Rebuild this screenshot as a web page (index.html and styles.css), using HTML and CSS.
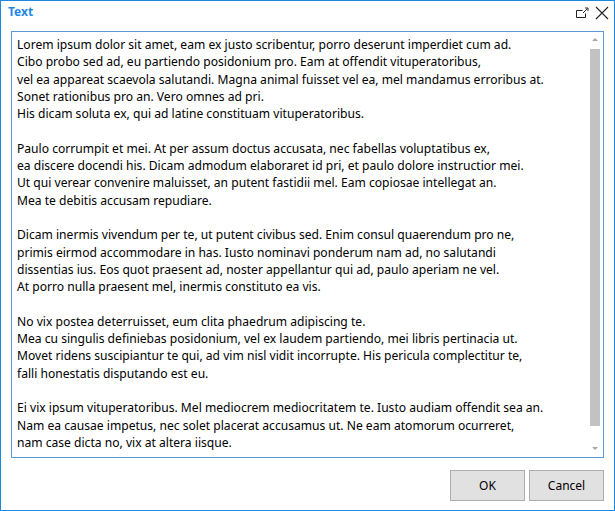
FILE: index.html
```html
<!DOCTYPE html>
<html>
<head>
<meta charset="utf-8">
<link rel="stylesheet" href="styles.css">
</head>
<body>
<div class="window">
  <div class="titlebar">
    <div class="title">Text</div>
    <div class="controls">
      <svg class="icon" width="14" height="14" viewBox="0 0 14 14">
        <path d="M7.5 4.5 H1.5 V11.5 H10.5 V7.5" fill="none" stroke="#222" stroke-width="1"/>
        <path d="M8 7 L12 3" stroke="#222" stroke-width="1"/>
        <path d="M10 2 H13 V5" fill="none" stroke="#222" stroke-width="1"/>
      </svg>
      <svg class="icon close" width="14" height="14" viewBox="0 0 14 14">
        <path d="M1 1 L13 13 M13 1 L1 13" stroke="#222" stroke-width="1.1"/>
      </svg>
    </div>
  </div>
  <div class="textbox">
    <div class="content">
      <p>Lorem ipsum dolor sit amet, eam ex justo scribentur, porro deserunt imperdiet cum ad.<br>Cibo probo sed ad, eu partiendo posidonium pro. Eam at offendit vituperatoribus,<br>vel ea appareat scaevola salutandi. Magna animal fuisset vel ea, mel mandamus erroribus at.<br>Sonet rationibus pro an. Vero omnes ad pri.<br>His dicam soluta ex, qui ad latine constituam vituperatoribus.</p>
      <p>Paulo corrumpit et mei. At per assum doctus accusata, nec fabellas voluptatibus ex,<br>ea discere docendi his. Dicam admodum elaboraret id pri, et paulo dolore instructior mei.<br>Ut qui verear convenire maluisset, an putent fastidii mel. Eam copiosae intellegat an.<br>Mea te debitis accusam repudiare.</p>
      <p>Dicam inermis vivendum per te, ut putent civibus sed. Enim consul quaerendum pro ne,<br>primis eirmod accommodare in has. Iusto nominavi ponderum nam ad, no salutandi<br>dissentias ius. Eos quot praesent ad, noster appellantur qui ad, paulo aperiam ne vel.<br>At porro nulla praesent mel, inermis constituto ea vis.</p>
      <p>No vix postea deterruisset, eum clita phaedrum adipiscing te.<br>Mea cu singulis definiebas posidonium, vel ex laudem partiendo, mei libris pertinacia ut.<br>Movet ridens suscipiantur te qui, ad vim nisl vidit incorrupte. His pericula complectitur te,<br>falli honestatis disputando est eu.</p>
      <p>Ei vix ipsum vituperatoribus. Mel mediocrem mediocritatem te. Iusto audiam offendit sea an.<br>Nam ea causae impetus, nec solet placerat accusamus ut. Ne eam atomorum ocurreret,<br>nam case dicta no, vix at altera iisque.</p>
    </div>
    <div class="scrollbar">
      <div class="arrow up"></div>
      <div class="thumb"></div>
      <div class="arrow down"></div>
    </div>
  </div>
  <div class="buttons">
    <button class="btn">OK</button>
    <button class="btn">Cancel</button>
  </div>
</div>
</body>
</html>
```

FILE: styles.css
```css
html, body {
  margin: 0;
  padding: 0;
  background: #ffffff;
}
.window {
  width: 615px;
  height: 511px;
  box-sizing: border-box;
  border: 1px solid #1c88e0;
  background: #ffffff;
  display: flex;
  flex-direction: column;
  padding: 0 10px;
  font-family: "Noto Sans", "Open Sans", sans-serif;
}
.titlebar {
  height: 30px;
  display: flex;
  justify-content: space-between;
  align-items: flex-start;
  margin: 0 -10px;
  padding: 0 5px 0 7px;
}
.title {
  margin-top: 2px;
  font-weight: bold;
  font-size: 12px;
  color: #1e88e5;
}
.controls {
  display: flex;
  gap: 6px;
  margin-top: 5px;
}
.icon {
  display: block;
}
.textbox {
  height: 427px;
  box-sizing: border-box;
  border: 1px solid #5a9bd6;
  display: flex;
}
.content {
  flex: 1;
  padding: 4px 0 0 5px;
  font-size: 12.1px;
  line-height: 17.3px;
  color: #000;
  overflow: hidden;
  white-space: nowrap;
}
.content p {
  margin: 0 0 17.3px 0;
}
.scrollbar {
  width: 17px;
  display: flex;
  flex-direction: column;
  align-items: center;
}
.arrow {
  width: 0;
  height: 0;
  border-left: 3px solid transparent;
  border-right: 3px solid transparent;
}
.arrow.up {
  margin-top: 6px;
  border-bottom: 3px solid #a8a8a8;
  margin-bottom: 8px;
}
.arrow.down {
  margin-top: 21px;
  border-top: 3px solid #a8a8a8;
}
.thumb {
  width: 10px;
  height: 377px;
  background: #c2c2c2;
}
.buttons {
  display: flex;
  justify-content: flex-end;
  gap: 4px;
  margin-top: 12px;
}
.btn {
  width: 75px;
  height: 31px;
  box-sizing: border-box;
  background: #e1e1e1;
  border: 1px solid #adadad;
  font-family: "Noto Sans", "Open Sans", sans-serif;
  font-size: 12px;
  color: #000;
  padding: 0;
}
```
